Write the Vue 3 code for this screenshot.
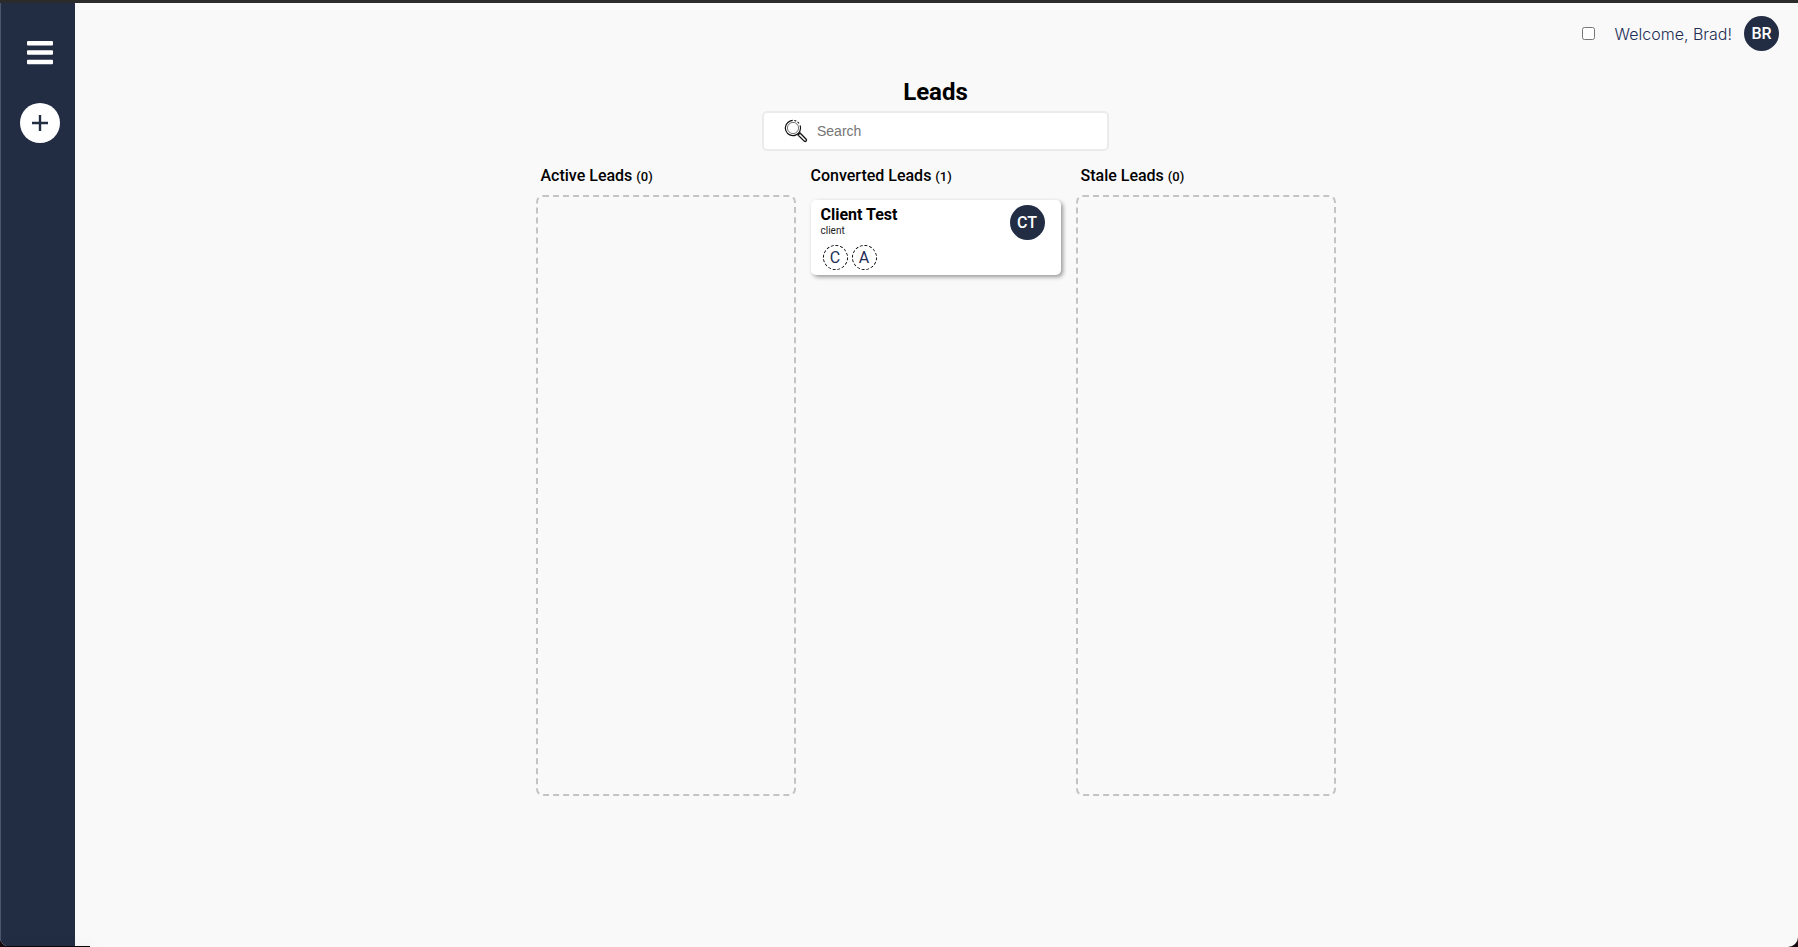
<script setup>
import { ref } from 'vue'

const search = ref('')
const toggled = ref(false)
const columns = [
  { title: 'Active Leads', leads: [] },
  {
    title: 'Converted Leads',
    leads: [{ name: 'Client Test', type: 'client', initials: 'CT', tags: ['C', 'A'] }],
  },
  { title: 'Stale Leads', leads: [] },
]
</script>

<template>
  <div class="window">
    <div class="app">
      <nav class="sidebar" aria-label="Main">
        <button class="menu" type="button" aria-label="Menu">
          <svg width="28" height="24" viewBox="0 0 28 24" fill="#fff">
            <rect x="1" y="0" width="26" height="4.5" rx="1" />
            <rect x="1" y="9.3" width="26" height="4.5" rx="1" />
            <rect x="1" y="18.8" width="26" height="4.5" rx="1" />
          </svg>
        </button>
        <button class="add" type="button" aria-label="Add lead">
          <svg width="18" height="18" viewBox="0 0 18 18" stroke="#222d44" stroke-width="2.4">
            <path d="M9 1v16M1 9h16" />
          </svg>
        </button>
      </nav>
      <div class="content">
        <header class="topbar">
          <input v-model="toggled" class="toggle" type="checkbox" aria-label="Toggle" />
          <span class="welcome">Welcome, Brad!</span>
          <span class="avatar">BR</span>
        </header>
        <main class="main">
          <h1>Leads</h1>
          <label class="search">
            <svg width="24" height="24" viewBox="0 0 24 24" fill="none" stroke="#111">
              <circle cx="9" cy="9" r="7.6" stroke-width="1.2" stroke-dasharray="38 1.5 2 1.5 2 2.7" transform="rotate(-20 9 9)" />
              <circle cx="9" cy="9" r="5.6" stroke="#666" stroke-width="0.9" />
              <path d="M14 16l2-2 6.2 6.2q.8.9-.1 1.8t-1.9.1z" stroke-width="1.3" />
            </svg>
            <input v-model="search" type="text" placeholder="Search" aria-label="Search" />
          </label>
          <div class="board">
            <section v-for="column in columns" :key="column.title" class="column">
              <h2>{{ column.title }} <small>({{ column.leads.length }})</small></h2>
              <div class="lane" :class="{ empty: !column.leads.length }">
                <article v-for="lead in column.leads" :key="lead.name" class="card">
                  <div>
                    <h3>{{ lead.name }}</h3>
                    <p>{{ lead.type }}</p>
                    <div class="tags">
                      <span v-for="tag in lead.tags" :key="tag" class="tag">{{ tag }}</span>
                    </div>
                  </div>
                  <span class="avatar">{{ lead.initials }}</span>
                </article>
              </div>
            </section>
          </div>
        </main>
      </div>
    </div>
  </div>
</template>

<style>
body {
  background: #140a10;
}
</style>

<style scoped>
* {
  box-sizing: border-box;
}
.window {
  position: relative;
  overflow: hidden;
  min-height: 100vh;
  display: flex;
  border-top: 3px solid #2b2b2b;
  font-family: Roboto, "Liberation Sans", sans-serif;
  color: #000;
}
.window::after {
  content: "";
  position: absolute;
  left: 6px;
  bottom: 0;
  width: 84px;
  height: 1px;
  background: #08080a;
  box-shadow: 0 2px 12px rgba(0, 0, 0, 0.35);
}
.app {
  flex: 1;
  display: flex;
  overflow: hidden;
  border-radius: 0 0 10px 10px;
  background: #f9f9f9;
}
.sidebar {
  width: 75px;
  flex: none;
  display: flex;
  flex-direction: column;
  align-items: center;
  gap: 38px;
  padding: 38px 0 0 4px;
  background: #222d44;
  border-left: 1px solid #4e576a;
}
button {
  display: flex;
  align-items: center;
  justify-content: center;
  border: 0;
  padding: 0;
  background: none;
}
.add {
  width: 40px;
  height: 40px;
  border-radius: 50%;
  background: #fff;
}
.content {
  flex: 1;
}
.topbar {
  display: flex;
  align-items: center;
  justify-content: flex-end;
  padding: 13px 19px 0 0;
}
.toggle {
  width: 13px;
  height: 13px;
  margin: 0 20px 0 0;
}
.welcome {
  margin-right: 12px;
  font: 300 16px/20px Inter, sans-serif;
  color: #222d54;
}
.avatar {
  display: flex;
  align-items: center;
  justify-content: center;
  width: 35px;
  height: 35px;
  border-radius: 50%;
  background: #222d44;
  color: #fff;
  font-size: 16px;
  font-weight: 500;
}
.main {
  display: flex;
  flex-direction: column;
  align-items: center;
  padding: 25px 2px 0 0;
}
h1,
h2,
h3,
p {
  margin: 0;
}
h1 {
  font-size: 24px;
  line-height: 32px;
  font-weight: 700;
}
.search {
  display: flex;
  align-items: center;
  gap: 9px;
  width: 347px;
  height: 40px;
  margin-top: 3px;
  padding: 0 20px;
  border: 2px solid #ebebeb;
  border-radius: 5px;
  background: #fff;
}
.search input {
  flex: 1;
  min-width: 0;
  border: 0;
  padding: 0;
  outline: 0;
  background: none;
  font: 14px/20px "Liberation Sans", Arial, sans-serif;
}
.search input::placeholder {
  color: #757575;
}
.board {
  display: flex;
  gap: 10px;
  margin-top: 15px;
}
.column {
  width: 260px;
}
h2 {
  padding-left: 5px;
  font-size: 16px;
  line-height: 20px;
  font-weight: 500;
}
small {
  font-size: 13px;
}
.lane {
  height: 601px;
  margin-top: 8px;
  padding: 5px;
}
.empty {
  border: 2px dashed #c4c4c4;
  border-radius: 7px;
}
.card {
  display: flex;
  justify-content: space-between;
  height: 75px;
  padding: 5px 16px 5px 10px;
  border-radius: 5px;
  background: #fff;
  box-shadow: 2px 2px 4px rgba(0, 0, 0, 0.4);
}
h3 {
  font-size: 16px;
  line-height: 19px;
  font-weight: 700;
}
p {
  font-size: 10px;
  line-height: 13px;
  color: #222;
}
.tags {
  display: flex;
  gap: 4px;
  padding: 8px 0 0 2px;
}
.tag {
  display: flex;
  align-items: center;
  justify-content: center;
  width: 25px;
  height: 25px;
  border: 1px dashed #000;
  border-radius: 50%;
  color: #222d54;
  font-size: 16px;
}
</style>
